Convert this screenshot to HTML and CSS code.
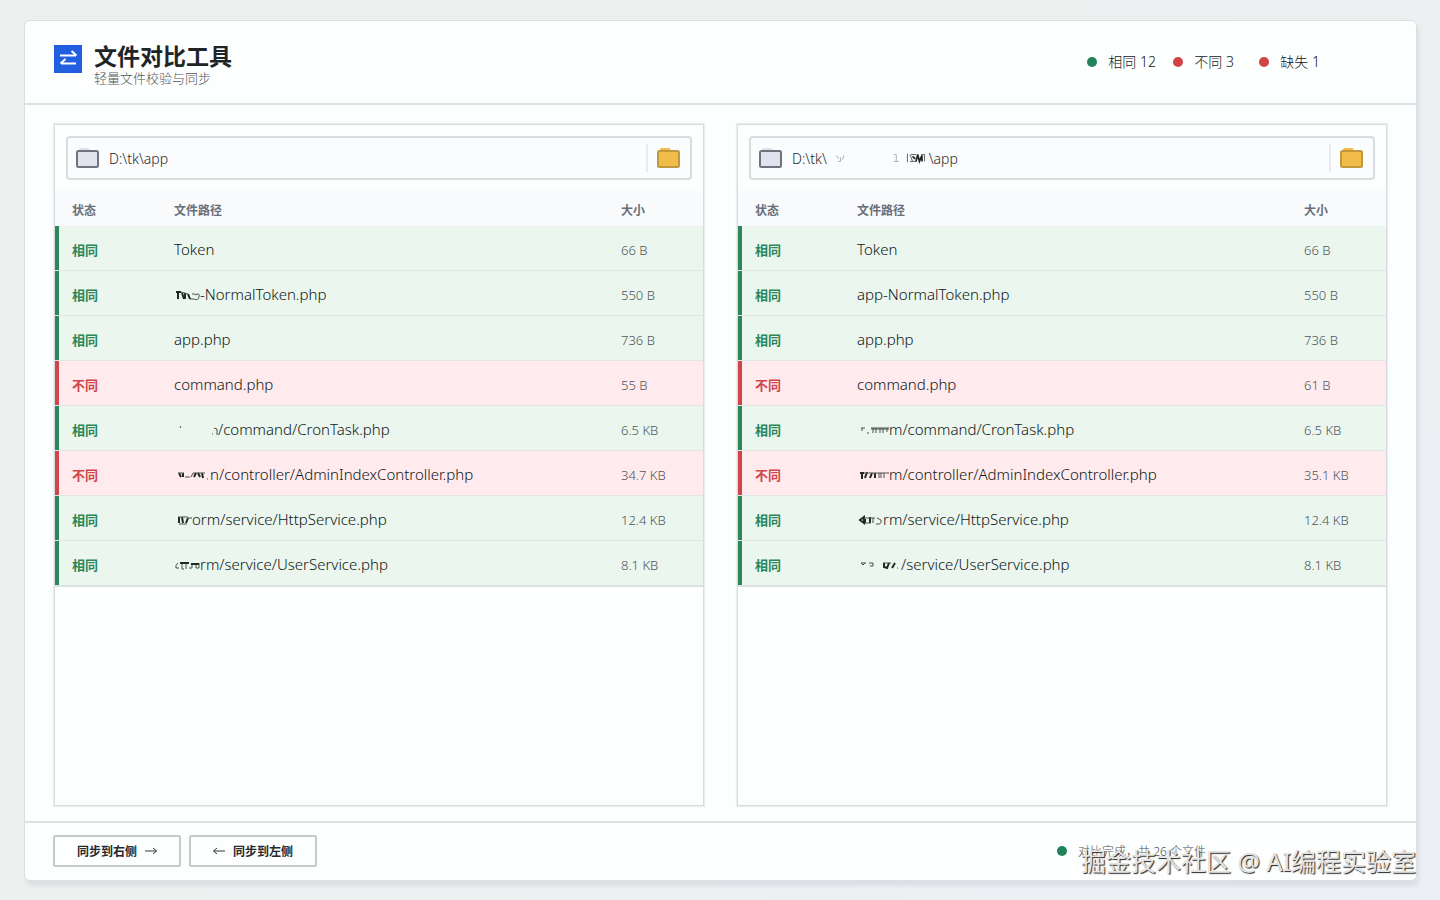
FILE: index.html
```html
<!DOCTYPE html>
<html lang="zh-CN">
<head>
    <meta charset="UTF-8">
    <meta name="viewport" content="width=device-width, initial-scale=1.0">
    <title>文件对比工具</title>
    <link rel="stylesheet" href="styles.css">
</head>
<body>

    <!-- Shared icons -->
    <svg class="sprite" aria-hidden="true">
        <symbol id="folder" viewBox="0 0 24 22">
            <path class="tab" d="M3 4V2.500Q3 1 4.500 1H12Q13.500 1 13.500 2.500V4Z"/>
            <rect x="1" y="4" width="21" height="16" rx="1.500"/>
        </symbol>
    </svg>

    <div class="window">

        <!-- Header -->
        <header class="header">
            <div class="brand">
                <svg class="logo" viewBox="0 0 28 28" aria-hidden="true">
                    <rect width="28" height="28"/>
                    <path d="M6 10.500H22M17.500 6L22.500 10.500M22 18.500H7M11.500 14L6.500 18.500"/>
                </svg>
                <div>
                    <h1>文件对比工具</h1>
                    <p>轻量文件校验与同步</p>
                </div>
            </div>
            <ul class="summary">
                <li><i class="dot same"></i>相同 12</li>
                <li><i class="dot diff"></i>不同 3</li>
                <li><i class="dot diff"></i>缺失 1</li>
            </ul>
        </header>

        <!-- Compare panels -->
        <main class="panels">
            <section class="panel">
                <div class="path-box">
                    <svg class="folder grey"><use href="#folder"/></svg>
                    <input type="text" aria-label="左侧目录" value="D:\tk\app">
                    <button type="button" aria-label="选择左侧目录"><svg class="folder yellow"><use href="#folder"/></svg></button>
                </div>
                <table>
                    <thead>
                        <tr><th class="status">状态</th><th>文件路径</th><th class="size">大小</th></tr>
                    </thead>
                    <tbody>
                        <tr class="same"><td class="status">相同</td><td>Token</td><td class="size">66 B</td></tr>
                        <tr class="same"><td class="status">相同</td><td><svg class="smudge w26" viewBox="0 0 26 12"><path class="ink" d="M2 2H7M4 1V9M8 3L10 9M11 3V9M14 4L16 9"/><path d="M7 2L14 4M16 9H20M18 4H21M21 5Q26 2 25 7Q24 11 20 9"/></svg>-NormalToken.php</td><td class="size">550 B</td></tr>
                        <tr class="same"><td class="status">相同</td><td>app.php</td><td class="size">736 B</td></tr>
                        <tr class="diff"><td class="status">不同</td><td>command.php</td><td class="size">55 B</td></tr>
                        <tr class="same"><td class="status">相同</td><td><svg class="smudge w44" viewBox="0 0 44 12"><path d="M6 1L7 3M38 9H39M40 3L43 4V10"/></svg>/command/CronTask.php</td><td class="size">6.5 KB</td></tr>
                        <tr class="diff"><td class="status">不同</td><td><svg class="smudge w36" viewBox="0 0 36 12"><path class="ink" d="M5 3L7 7M9 3V7M20 7L22 3M24 3L26 7M28 3L29 8"/><path d="M4 3H10M11 7H16M17 7L19 3H31M33 9H34"/></svg>n/controller/AdminIndexController.php</td><td class="size">34.7 KB</td></tr>
                        <tr class="same"><td class="status">相同</td><td><svg class="smudge w18" viewBox="0 0 18 12"><path class="ink" d="M5 2V8M8 2L9 8M12 8L14 3"/><path d="M4 2H14M5 9H13M14 3H18"/></svg>orm/service/HttpService.php</td><td class="size">12.4 KB</td></tr>
                        <tr class="same"><td class="status">相同</td><td><svg class="smudge w26" viewBox="0 0 26 12"><path d="M4 3Q1 5 2 8H5M8 3V9H10M12 3V9M15 8H18V3M22 3V8H25V3"/><path class="ink" d="M6 3H15M17 4H25"/></svg>rm/service/UserService.php</td><td class="size">8.1 KB</td></tr>
                    </tbody>
                </table>
            </section>

            <section class="panel">
                <div class="path-box">
                    <svg class="folder grey"><use href="#folder"/></svg>
                    <input type="text" aria-label="右侧目录" value="D:\tk\&nbsp;&nbsp;&nbsp;&nbsp;&nbsp;&nbsp;&nbsp;&nbsp;&nbsp;&nbsp;&nbsp;&nbsp;&nbsp;&nbsp;&nbsp;&nbsp;&nbsp;&nbsp;&nbsp;&nbsp;&nbsp;&nbsp;&nbsp;&nbsp;&nbsp;&nbsp;&nbsp;&nbsp;\app">
                    <svg class="smudge path-smudge" viewBox="0 0 104 14"><path class="faint" d="M1 4L4 8M3 11H6V6M8 9L10 4M68 3H71V11M68 11H74"/><path d="M84 2V12M87 3L90 11M88 3H94M87 11H94M100 3H104V11"/><path class="ink" d="M90 5L93 8M94 11L96 3L98 11L101 4V11"/></svg>
                    <button type="button" aria-label="选择右侧目录"><svg class="folder yellow"><use href="#folder"/></svg></button>
                </div>
                <table>
                    <thead>
                        <tr><th class="status">状态</th><th>文件路径</th><th class="size">大小</th></tr>
                    </thead>
                    <tbody>
                        <tr class="same"><td class="status">相同</td><td>Token</td><td class="size">66 B</td></tr>
                        <tr class="same"><td class="status">相同</td><td>app-NormalToken.php</td><td class="size">550 B</td></tr>
                        <tr class="same"><td class="status">相同</td><td>app.php</td><td class="size">736 B</td></tr>
                        <tr class="diff"><td class="status">不同</td><td>command.php</td><td class="size">61 B</td></tr>
                        <tr class="same"><td class="status">相同</td><td><svg class="smudge w32" viewBox="0 0 32 12"><path d="M4 3H8M5 3V6M10 8H12M14 3H32M14 4H32M16 3V8M19 3V8M23 3V8M26 3V8M30 3V7"/></svg>m/command/CronTask.php</td><td class="size">6.5 KB</td></tr>
                        <tr class="diff"><td class="status">不同</td><td><svg class="smudge w32" viewBox="0 0 32 12"><path class="ink" d="M3 3H7M5 2V9M8 8L10 2M13 8L15 3M18 3V8"/><path d="M7 3H32M22 3V8M24 3V8M27 3V8"/></svg>m/controller/AdminIndexController.php</td><td class="size">35.1 KB</td></tr>
                        <tr class="same"><td class="status">相同</td><td><svg class="smudge w26" viewBox="0 0 26 12"><path class="ink" d="M3 5L7 2V8ZM8 4V8M13 2V8"/><path d="M7 3H18M8 8H14M16 3V8M19 9Q25 10 24 5L20 3"/></svg>rm/service/HttpService.php</td><td class="size">12.4 KB</td></tr>
                        <tr class="same"><td class="status">相同</td><td><svg class="smudge w44" viewBox="0 0 44 12"><path d="M4 3L6 5L8 3M4 3H9M12 3H16V6H13M26 3H34M40 8H41"/><path class="ink" d="M27 3V7L30 8L32 3M35 8L38 3"/></svg>/service/UserService.php</td><td class="size">8.1 KB</td></tr>
                    </tbody>
                </table>
            </section>
        </main>

        <!-- Footer -->
        <footer class="footer">
            <button type="button">同步到右侧
                <svg viewBox="0 0 12 10" aria-hidden="true"><path d="M0 5H11.500M8 2L11.500 5L8 8"/></svg>
            </button>
            <button type="button">
                <svg viewBox="0 0 12 10" aria-hidden="true"><path d="M12 5H0.500M4 2L0.500 5L4 8"/></svg>
                同步到左侧</button>
            <p class="result"><i class="dot same"></i>对比完成，共 26 个文件</p>
        </footer>

        <div class="watermark">掘金技术社区 @ AI编程实验室</div>
    </div>

</body>
</html>
```

FILE: styles.css
```css
* {
    box-sizing: border-box;
}

body {
    margin: 0;
    min-height: 100vh;
    padding: 20px 23px 19px 24px;
    display: flex;
    background: linear-gradient(135deg, #ecf0ef, #edf0f0 50%, #ebeef4);
    font-family: "Noto Sans", "Noto Sans CJK SC", sans-serif;
    font-size: 14px;
    font-weight: 300;
    color: #111617;
}

h1, p, ul {
    margin: 0;
    padding: 0;
}

.sprite {
    position: absolute;
    width: 0;
    height: 0;
}

.window {
    position: relative;
    flex: 1;
    display: flex;
    flex-direction: column;
    background: #fdfefe;
    border: 1px solid #dcdfe1;
    border-radius: 6px;
    box-shadow: 2px 5px 4px rgba(60, 70, 90, 0.09);
}

/* Header */
.header {
    display: flex;
    justify-content: space-between;
    align-items: center;
    height: 84px;
    padding: 0 96px 0 29px;
    border-bottom: 2px solid #dfe2e3;
}

.brand {
    display: flex;
    align-items: center;
    gap: 12px;
    padding-top: 3px;
}

.logo {
    width: 28px;
    height: 28px;
    margin-bottom: 10px;
    fill: #225fe0;
}

.logo path {
    fill: none;
    stroke: #fff;
    stroke-width: 2;
}

.brand h1 {
    font-size: 23px;
    line-height: 28px;
    font-weight: 700;
    color: #1f2426;
}

.brand p {
    font-size: 13px;
    line-height: 16px;
    color: #505559;
}

.summary {
    display: flex;
    list-style: none;
}

.summary li {
    display: flex;
    align-items: center;
    width: 86px;
    line-height: 20px;
}

.summary li:last-child {
    width: auto;
}

.dot {
    width: 10px;
    height: 10px;
    margin-right: 11px;
    border-radius: 50%;
}

.dot.same {
    background: #238358;
}

.dot.diff {
    background: #cf4545;
}

/* Panels */
.panels {
    flex: 1;
    display: flex;
    gap: 33px;
    padding: 19px 29px 15px;
}

.panel {
    flex: 1;
    border: 1px solid #d8dcde;
    box-shadow: 0 0 1px 1px #eceeef;
}

.path-box {
    position: relative;
    display: flex;
    align-items: center;
    height: 44px;
    margin: 11px;
    padding-left: 8px;
    border: 2px solid #d9dcde;
    border-radius: 4px;
    background: #fafcfd;
}

.folder {
    display: block;
    width: 24px;
    height: 22px;
}

.folder.grey {
    fill: #e0e2ee;
    stroke: #70727c;
    stroke-width: 2;
}

.folder.yellow {
    fill: #f2bc48;
    stroke: #c1983c;
    stroke-width: 2;
}

.tab {
    stroke: none;
}

.path-box input {
    flex: 1;
    min-width: 0;
    margin-left: 9px;
    padding: 0;
    border: 0;
    outline: 0;
    background: none;
    font: inherit;
    color: #25292c;
}

.path-box button {
    height: 28px;
    padding: 0 9px;
    border: 0;
    border-left: 2px solid #e8eaed;
    background: none;
}

.path-smudge {
    position: absolute;
    left: 77px;
    width: 104px;
    height: 14px;
}

table {
    width: 100%;
    border-collapse: separate;
    border-spacing: 0;
    table-layout: fixed;
}

th, td {
    padding: 2px 0 0;
    text-align: left;
    white-space: nowrap;
}

th {
    height: 35px;
    background: #f8fafc;
    font-size: 12px;
    font-weight: 700;
    color: #6b6f7a;
}

td {
    height: 45px;
    border-bottom: 1px solid #dfe7e4;
    font-size: 15px;
}

tr:last-child td {
    height: 46px;
    border-bottom: 2px solid #dce1e1;
}

.status {
    width: 119px;
    padding-left: 17px;
}

.size {
    width: 82px;
}

td.status {
    font-size: 13px;
    font-weight: 700;
}

td.size {
    padding-top: 3px;
    font-size: 13px;
    color: #4d5458;
}

tr.same {
    background: #eaf6ee;
}

tr.diff {
    background: #ffebed;
}

tr.same .status {
    color: #2b8658;
    box-shadow: inset 4px 0 #2b8658;
}

tr.diff .status {
    color: #d04549;
    box-shadow: inset 4px 0 #d04549;
}

/* Scribbled-out part of a path */
.smudge {
    height: 12px;
    overflow: visible;
    fill: none;
    stroke: #4a514e;
    stroke-width: 1;
}

td .smudge {
    vertical-align: -2px;
}

.smudge .ink {
    stroke: #222826;
    stroke-width: 2;
}

.smudge .faint {
    stroke: #a0a5a8;
}

.w18 {
    width: 18px;
}

.w26 {
    width: 26px;
}

.w32 {
    width: 32px;
}

.w36 {
    width: 36px;
}

.w44 {
    width: 44px;
}

/* Footer */
.footer {
    display: flex;
    align-items: center;
    gap: 8px;
    height: 59px;
    padding: 0 210px 2px 28px;
    border-top: 2px solid #dfe2e3;
}

.footer button {
    display: flex;
    justify-content: center;
    align-items: center;
    gap: 8px;
    width: 128px;
    height: 32px;
    padding: 0;
    border: 2px solid #c6cacb;
    border-radius: 2px;
    background: #fdfefe;
    font: inherit;
    font-size: 12px;
    font-weight: 700;
    color: #24292b;
}

.footer button svg {
    width: 12px;
    height: 10px;
    fill: none;
    stroke: #33383a;
}

.result {
    display: flex;
    align-items: center;
    margin-left: auto;
    font-size: 12px;
    color: #4c5155;
}

.watermark {
    position: absolute;
    right: 0;
    bottom: 0;
    font-size: 25px;
    line-height: 38px;
    font-weight: 400;
    color: #e4e4e4;
    text-shadow: 1px 1px 1px #222;
}
```
